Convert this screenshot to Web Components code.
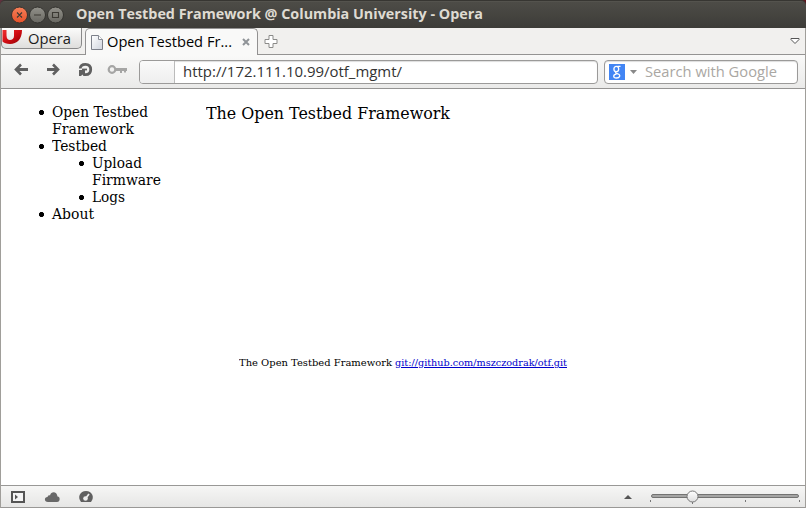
<!DOCTYPE html>
<html lang="en"><head><meta charset="utf-8"><title>Open Testbed Framework</title>
<style>html,body{margin:0;width:806px;height:508px;overflow:hidden;background:#3c3b37}</style></head><body>
<browser-window></browser-window>
<script>
class BaseElement extends HTMLElement{
  constructor(){super();this.attachShadow({mode:'open'}).innerHTML=this.constructor.markup;}
}
// A single line of text scaled horizontally to its "width" attribute.
class FitText extends BaseElement{
  static markup=`<style>:host{display:block;flex:none;white-space:nowrap}span{display:inline-block;transform-origin:0 50%}</style><span><slot></slot></span>`;
  connectedCallback(){
    const w=+this.getAttribute('width'),s=this.shadowRoot.querySelector('span');
    this.style.width=w+'px';
    const n=s.getBoundingClientRect().width;
    if(n)s.style.transform='scaleX('+w/n+')';
  }
}
class TitleBar extends BaseElement{
  static markup=`<style>
  :host{display:flex;align-items:center;box-sizing:border-box;height:28px;padding-left:11px;border-top:1px solid #373632;background:linear-gradient(#5b5a54 0,#4d4c47 1px,#3d3c38);font:bold 14px/20px "Open Sans","Noto Sans",sans-serif;color:#dfdbd2;border-radius:5px 5px 0 0}
  svg{display:block;margin-right:11px}fit-text{margin-top:-2px}</style>
  <svg width="54" height="18" viewBox="0 0 54 18"><defs><linearGradient id="o" x2="0" y2="1"><stop stop-color="#f68059"/><stop offset="1" stop-color="#e6512a"/></linearGradient><linearGradient id="g" x2="0" y2="1"><stop stop-color="#92918a"/><stop offset="1" stop-color="#686761"/></linearGradient></defs>
  <g stroke="#33322e"><circle cx="8.5" cy="9" r="8" fill="url(#o)"/><circle cx="26.5" cy="9" r="8" fill="url(#g)"/><circle cx="44.5" cy="9" r="8" fill="url(#g)"/></g>
  <path d="M6 6.5l5 5m0-5l-5 5M23 9h7M41.500 6.500h6v5h-6z" stroke="#3b3933" stroke-width="1.1" fill="none"/></svg>
  <fit-text width="407">Open Testbed Framework @ Columbia University - Opera</fit-text>`;
}
class TabBar extends BaseElement{
  static markup=`<style>
  :host{display:flex;box-sizing:border-box;height:27px;background:#f1f0ee;box-shadow:inset 0 -1px #949392;font:14px/20px "Open Sans","Noto Sans",sans-serif;color:#1b1b1b}
  .menu{display:flex;box-sizing:border-box;width:81px;height:21px;border:1px solid #888;border-top:0;border-radius:0 0 5px 5px;background:linear-gradient(#fbfbfa,#dfdedc)}
  .menu svg{flex:none;margin-right:5px}.menu fit-text{padding-top:1px}
  .tab{display:flex;align-items:center;box-sizing:border-box;width:173px;height:27px;margin-left:3px;padding:0 6px 0 5px;border:1px solid #929191;border-bottom:0;border-radius:5px 5px 0 0;background:#f9f9f8;color:#000}
  .tab svg{flex:none}.tab fit-text{margin:0 10px 0 4px}
  .plus{margin:7px auto 0 6px}.down{margin:10px 5px 0 0}</style>
  <div class="menu"><svg width="21" height="17" viewBox="0 0 21 17"><defs><linearGradient id="r" x2="1" y2="1"><stop stop-color="#f03030"/><stop offset=".5" stop-color="#d00c12"/><stop offset="1" stop-color="#8e0004"/></linearGradient></defs><path d="M.5 2h4v5.500C4.500 10.500 6 12 8 12s4-1.500 4-4V2h8C20 11 15 16 8 16 4.500 16 2 15 .5 13.500z" fill="url(#r)"/></svg><fit-text width="43">Opera</fit-text></div>
  <div class="tab"><svg width="12" height="15" viewBox="0 0 12 15"><defs><linearGradient id="p" x2="1" y2="1"><stop stop-color="#fff"/><stop offset="1" stop-color="#cfd4de"/></linearGradient></defs><path d="M.5.5h7l4 4v10H.5z" fill="url(#p)" stroke="#7c808a"/><path d="M7.500.5v4h4" fill="#fff" stroke="#888c95"/></svg><fit-text width="125">Open Testbed Fr...</fit-text><svg width="8" height="8" viewBox="0 0 8 8"><path d="M1 1l6 6m0-6L1 7" stroke="#909498" stroke-width="2"/></svg></div>
  <svg class="plus" width="14" height="14" viewBox="0 0 14 14"><path d="M5 .5h4v4h4v4H9v4H5v-4H1v-4h4z" fill="#fff" stroke="#8b8b89"/></svg>
  <svg class="down" width="10" height="7" viewBox="0 0 10 7"><path d="M1 .5h8v1L5 5.500 1 1.500z" fill="#fff" stroke="#555"/></svg>`;
}
class AddressBar extends BaseElement{
  static markup=`<style>
  :host{display:flex;align-items:center;box-sizing:border-box;height:34px;padding:0 7px 0 13px;border-bottom:1px solid #949392;background:linear-gradient(#f9f9f8,#eaeae9);font:14px/20px "Open Sans","Noto Sans",sans-serif;color:#333}
  svg{display:block;flex:none}.nav{margin:-3px 11px 0 0}
  .box{display:flex;align-items:center;box-sizing:border-box;height:24px;border:1px solid #9b9a99;border-radius:4px;background:#fff;box-shadow:inset 0 1px 1px #ddd}
  .url{width:460px;margin-right:6px}.id{width:34px;height:22px;border-right:1px solid #bbb;border-radius:3px 0 0 3px;background:linear-gradient(#fafafa,#eee);margin-right:8px}
  .search{width:194px;padding-left:4px;color:#aaa7a3}.search svg{margin-right:8px}</style>
  <svg class="nav" width="114" height="18" viewBox="14 61 114 18">
  <g fill="none" stroke="#606060"><path d="M16 69.500h12M47 69.500h11" stroke-width="2.800"/><path d="M21 64.500l-5 5 5 5M53 64.500l5 5-5 5" stroke-width="2.600"/><path d="M80.300 68.500C80.300 65.500 82 64.300 85.500 64.300c3.500 0 5.200 2 5.200 5.200s-1.800 5.200-5.200 5.200H84" stroke-width="2.800"/><path d="M82 69.500h5" stroke-width="1.800"/></g><path d="M79 70h6v6h-1.500l-1-1.500-1.500 1.500h-2z" fill="#606060"/>
  <g fill="none" stroke="#a5a5a4"><ellipse cx="112" cy="69.500" rx="3.300" ry="3.300" stroke-width="2.200"/><path d="M116 69.500h11" stroke-width="3"/><path d="M121 70v3M125 70v2.500" stroke-width="2"/></g></svg>
  <div class="box url"><div class="id"></div><fit-text width="219">http://172.111.10.99/otf_mgmt/</fit-text></div>
  <div class="box search"><svg width="28" height="16" viewBox="0 0 28 16"><path d="M0 0h16v16H0z" fill="#4285f4"/><g fill="none" stroke="#fff" stroke-width="1.300"><ellipse cx="7.300" cy="5" rx="2.400" ry="2.700"/><path d="M8.500 2.300h3M7 7.700c-1 1.200 0 1.700 1.800 2.200C12 10.800 11 14 7.500 14 3.800 14 3.800 10.400 7.500 10.200"/></g><path d="M21 6h7l-3.500 4z" fill="#898989"/></svg><fit-text width="132">Search with Google</fit-text></div>`;
}
class PageView extends BaseElement{
  static markup=`<style>
  :host{display:flex;flex-direction:column;box-sizing:border-box;height:396px;background:#fff;color:#000;font:16px/19px "DejaVu Serif",serif}
  .top{display:flex;height:267px;box-sizing:border-box;padding:15px 0 0 11px}
  nav{width:194px;font-size:14px;line-height:17px}ul{margin:0;padding-left:40px;list-style:none}
  li{margin-left:-14px;padding-left:14px;background:radial-gradient(circle,#000 2.200px,transparent 2.900px) 0 5px/7px 7px no-repeat}
  footer{display:flex;gap:3px;padding-left:238px;font-size:10px;line-height:14px}a{color:#0000cc;text-decoration:underline}</style>
  <div class="top"><nav><ul><li><fit-text width="96">Open Testbed</fit-text><fit-text width="82">Framework</fit-text></li><li><fit-text width="55">Testbed</fit-text><ul><li><fit-text width="50">Upload</fit-text><fit-text width="69">Firmware</fit-text></li><li><fit-text width="33">Logs</fit-text></li></ul></li><li><fit-text width="42">About</fit-text></li></ul></nav><fit-text width="244">The Open Testbed Framework</fit-text></div>
  <footer><fit-text width="153">The Open Testbed Framework</fit-text><fit-text width="172"><a>git://github.com/mszczodrak/otf.git</a></fit-text></footer>`;
}
class StatusBar extends BaseElement{
  static markup=`<style>:host{display:flex;justify-content:space-between;box-sizing:border-box;height:23px;padding:0 5px 0 10px;border-top:1px solid #999896;border-bottom:1px solid #999896;background:linear-gradient(#f6f6f5,#e6e6e5)}svg{display:block}</style>
  <svg width="86" height="21" viewBox="11 486 86 21"><path d="M12 492h12v10H12z" fill="#f5f5f5" stroke="#555" stroke-width="2"/><path d="M15 494.500l3 2.500-3 2.500z" fill="#555"/><path d="M48 502c-4 0-4-5-.5-5 .5-2 2-2 2.500-1.500 1-4.500 7-4.500 7.500 1 3 0 3 5.500-.5 5.500z" fill="#686868"/><path d="M81 502c-4-5-1-11 5-11s9 6 5 11z" fill="#606060"/><circle cx="85.500" cy="498.500" r="2.300" fill="#eee"/><path d="M86 498l3-4" stroke="#eee" stroke-width="1.700"/></svg>
  <svg width="178" height="21" viewBox="622 486 178 21"><defs><linearGradient id="k" x2="0" y2="1"><stop stop-color="#fff"/><stop offset="1" stop-color="#ddd"/></linearGradient></defs><path d="M624 499l4-4 4 4z" fill="#555"/><rect x="651.500" y="494.500" width="147" height="3" rx="1.500" fill="#a5a5a4" stroke="#737372"/><path d="M650.500 500v2M692.500 501v3M745.500 500v2M799.500 500v2" stroke="#777"/><circle cx="692.500" cy="496.500" r="5.500" fill="url(#k)" stroke="#777"/></svg>`;
}
class BrowserWindow extends BaseElement{
  static markup=`<style>:host{display:block;width:806px;height:508px;background:linear-gradient(90deg,#64303e,#3c3b37 8px,#3c3b37 795px,#60131c)}main{margin:0;border:solid #a09e9a;border-width:0 1px}</style><title-bar></title-bar><main><tab-bar></tab-bar><address-bar></address-bar><page-view></page-view><status-bar></status-bar></main>`;
}
for(const [n,c] of [['fit-text',FitText],['title-bar',TitleBar],['tab-bar',TabBar],['address-bar',AddressBar],['page-view',PageView],['status-bar',StatusBar],['browser-window',BrowserWindow]])customElements.define(n,c);
</script></body></html>
